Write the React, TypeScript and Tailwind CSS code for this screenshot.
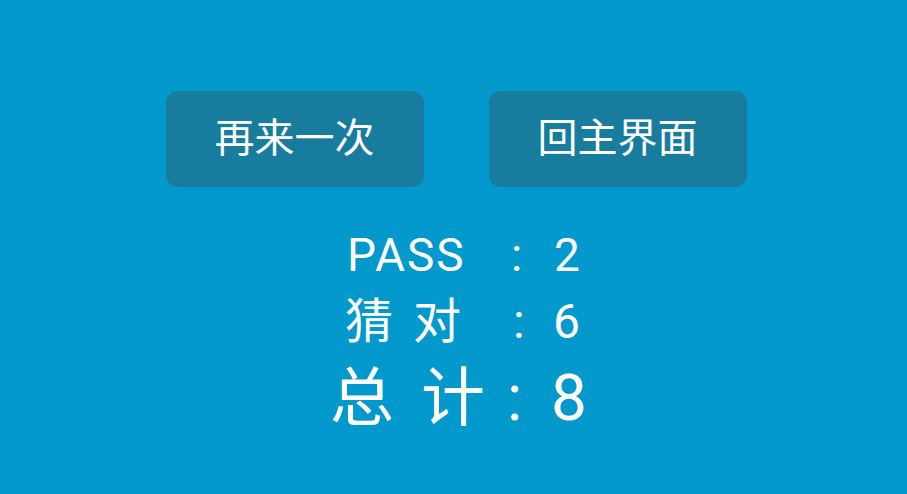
import React from "react";

const font = { fontFamily: "Roboto, 'Noto Sans CJK SC', sans-serif" };

function ActionButton({ label }: { label: string }) {
  return (
    <button className="w-[258px] h-[96px] rounded-[12px] bg-[#187c9e] text-white text-[40px] leading-none">
      {label}
    </button>
  );
}

export default function App() {
  return (
    <div className="w-[907px] h-[494px] bg-[#0399cc] flex flex-col text-white" style={font}>
      <div className="flex justify-center gap-[65px] mt-[91px] ml-[5px]">
        <ActionButton label="再来一次" />
        <ActionButton label="回主界面" />
      </div>

      {/* score rows */}
      <div className="flex flex-col mt-[45px]">
        <div className="flex text-[46px] leading-none pl-[347px]">
          <span className="w-[164px] tracking-[2px]">PASS</span>
          <span className="w-[43px]">:</span>
          <span>2</span>
        </div>
        <div className="flex text-[48px] leading-none pl-[345px] mt-[20px]">
          <span className="w-[68px]">猜</span>
          <span className="w-[100px]">对</span>
          <span className="w-[40px]">:</span>
          <span>6</span>
        </div>
        <div className="flex text-[64px] leading-none pl-[330px] mt-[21px]">
          <span className="w-[91px]">总</span>
          <span className="w-[86px]">计</span>
          <span className="w-[44px]">:</span>
          <span>8</span>
        </div>
      </div>
    </div>
  );
}
